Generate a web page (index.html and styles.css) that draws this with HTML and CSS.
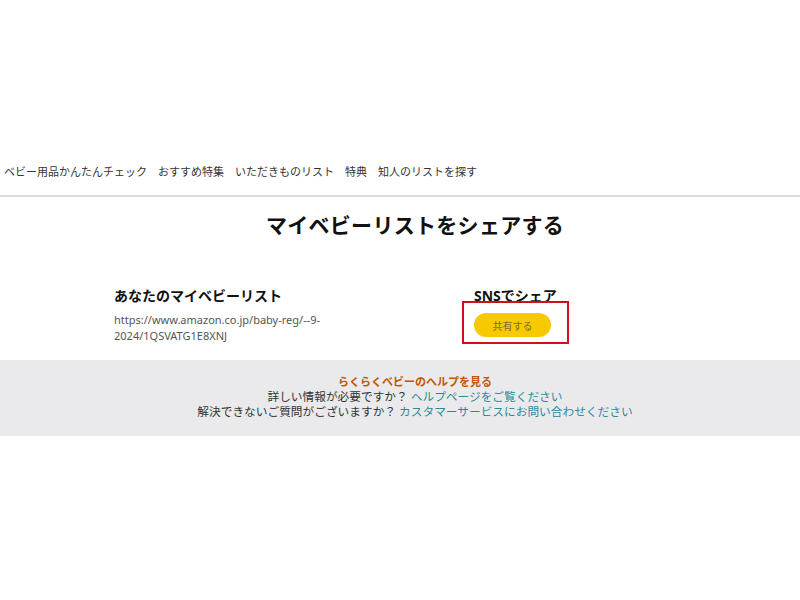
FILE: index.html
```html
<!DOCTYPE html>
<html lang="ja">
<head>
    <meta charset="UTF-8">
    <meta name="viewport" content="width=device-width, initial-scale=1.0">
    <title>マイベビーリストをシェアする</title>
    <link rel="stylesheet" href="styles.css">
</head>
<body>
    <div class="header">
        <ul class="nav">
            <li><a href="#">ベビー用品かんたんチェック</a></li>
            <li><a href="#">おすすめ特集</a></li>
            <li><a href="#">いただきものリスト</a></li>
            <li><a href="#">特典</a></li>
            <li><a href="#">知人のリストを探す</a></li>
        </ul>
    </div>

    <h1 class="title">マイベビーリストをシェアする</h1>

    <div class="share">
        <div class="share-left">
            <h3>あなたのマイベビーリスト</h3>
            <p class="url">https://www.amazon.co.jp/baby-reg/--9-2024/1QSVATG1E8XNJ</p>
        </div>
        <div class="share-right">
            <h3>SNSでシェア</h3>
            <button type="button" class="share-btn">共有する</button>
        </div>
    </div>

    <div class="help">
        <div class="help-inner">
            <a href="#" class="help-title">らくらくベビーのヘルプを見る</a>
            <p>詳しい情報が必要ですか？ <a href="#">ヘルプページをご覧ください</a></p>
            <p>解決できないご質問がございますか？ <a href="#">カスタマーサービスにお問い合わせください</a></p>
        </div>
    </div>
</body>
</html>
```

FILE: styles.css
```css
*{
    margin: 0;
    padding: 0;
    box-sizing: border-box;
}
body{
    background-color: #fff;
    color: #111;
    font-family: "Noto Sans", "Noto Sans CJK JP", sans-serif;
    line-height: 1.3;
}
a{
    text-decoration: none;
}
.header{
    padding-top: 164px;
    padding-bottom: 15px;
    border-bottom: 2px solid #dcdcdc;
}
.nav{
    list-style: none;
    display: flex;
    gap: 11px;
    padding-left: 4px;
}
.nav li{
    font-size: 11px;
    line-height: 16px;
}
.nav a{
    color: #333;
}
.title{
    margin-top: 14px;
    padding-left: 30px;
    text-align: center;
    font-size: 21px;
    line-height: 28px;
    letter-spacing: 0.3px;
    font-weight: 700;
    color: #111;
}
.share{
    display: flex;
    padding-left: 114px;
    margin-top: 47px;
    padding-bottom: 16px;
}
.share h3{
    font-size: 14px;
    line-height: 20px;
    font-weight: 700;
    color: #111;
}
.share-left{
    width: 360px;
}
.url{
    margin-top: 6px;
    width: 240px;
    font-size: 11px;
    line-height: 16px;
    color: #555;
}
.share-btn{
    position: relative;
    display: block;
    margin-top: 7px;
    width: 77px;
    height: 24px;
    border: none;
    border-radius: 12px;
    background-color: #f7ca00;
    color: #7d6b2c;
    font-family: "Noto Sans CJK JP", sans-serif;
    font-size: 10px;
}
/* red highlight frame */
.share-btn::after{
    content: "";
    position: absolute;
    top: -12px;
    left: -12px;
    right: -18px;
    bottom: -7px;
    border: 2px solid #d0101b;
}
.help{
    background-color: #eaeaec;
    padding: 14px 0 17px;
}
.help-inner{
    padding-left: 30px;
    text-align: center;
    font-size: 11.7px;
    line-height: 15px;
    color: #333;
}
.help-title{
    display: block;
    font-size: 11px;
    font-weight: 700;
    color: #c45500;
}
.help-inner p a{
    color: #2b8a99;
}
```
